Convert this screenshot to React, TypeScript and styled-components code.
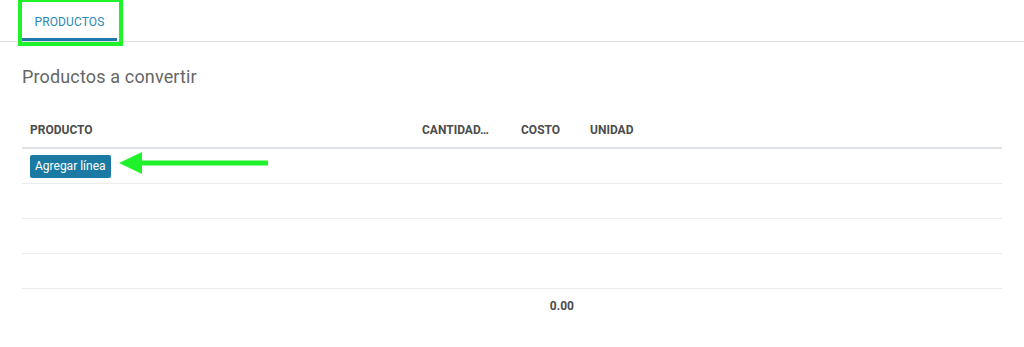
import React from "react";
import styled, { createGlobalStyle } from "styled-components";

const GlobalStyle = createGlobalStyle`
  html, body {
    margin: 0;
    padding: 0;
    background: #ffffff;
    font-family: Roboto, "Noto Sans", "Liberation Sans", sans-serif;
  }
`;

const Page = styled.div`
  position: relative;
  width: 1024px;
  height: 347px;
  overflow: hidden;
  background: #fff;
`;

const TabBar = styled.nav`
  display: flex;
  height: 41px;
  padding-left: 22px;
  border-bottom: 1px solid #e3e3e3;
`;

const Tab = styled.a<{ $active?: boolean }>`
  display: flex;
  align-items: center;
  justify-content: center;
  width: 95px;
  height: 33px;
  padding-top: 5px;
  box-sizing: content-box;
  font-size: 12px;
  letter-spacing: 0.1px;
  color: ${(p) => (p.$active ? "#2b87b5" : "#666")};
  border-bottom: 3px solid ${(p) => (p.$active ? "#1f78a8" : "transparent")};
  text-decoration: none;
`;

const Sheet = styled.section`
  padding: 24px 22px 0 22px;
`;

const Title = styled.h2`
  margin: 0 0 25px 0;
  font-size: 18px;
  font-weight: 400;
  line-height: 22px;
  letter-spacing: 0.15px;
  color: #666666;
`;

const Table = styled.table`
  width: 980px;
  border-collapse: collapse;
  table-layout: fixed;
  font-size: 12px;
`;

const Th = styled.th<{ $width?: number }>`
  width: ${(p) => (p.$width ? `${p.$width}px` : "auto")};
  height: 35px;
  padding: 0 8px;
  text-align: left;
  font-weight: 700;
  color: #4c4c4c;
  border-bottom: 2px solid #dee2e6;
  white-space: nowrap;
  box-sizing: border-box;
`;

const Td = styled.td<{ $right?: boolean; $bold?: boolean }>`
  height: 34px;
  padding: 0 8px;
  border-bottom: 1px solid #ececec;
  text-align: ${(p) => (p.$right ? "right" : "left")};
  font-weight: ${(p) => (p.$bold ? 700 : 400)};
  color: #4c4c4c;
`;

const FootTd = styled(Td)`
  border-bottom: none;
  height: 34px;
`;

const AddButton = styled.button`
  display: inline-block;
  height: 23px;
  padding: 0 5px;
  border: none;
  border-radius: 2px;
  background: #1b7aa3;
  color: #ffffff;
  font-family: inherit;
  font-size: 12px;
  line-height: 23px;
  cursor: pointer;
`;

const HighlightBox = styled.div`
  position: absolute;
  left: 18px;
  top: -2px;
  width: 105px;
  height: 48px;
  border: 4px solid #1ff22a;
  box-sizing: border-box;
  pointer-events: none;
`;

const Arrow = styled.svg`
  position: absolute;
  left: 118px;
  top: 151px;
  pointer-events: none;
`;

const columns = [
  { label: "PRODUCTO", width: 392 },
  { label: "CANTIDAD…", width: 99 },
  { label: "COSTO", width: 69 },
  { label: "UNIDAD", width: 0 },
];

export default function App() {
  return (
    <Page>
      <GlobalStyle />
      <TabBar>
        <Tab $active>PRODUCTOS</Tab>
      </TabBar>
      <Sheet>
        <Title>Productos a convertir</Title>
        <Table>
          <thead>
            <tr>
              {columns.map((c) => (
                <Th key={c.label} $width={c.width || undefined}>
                  {c.label}
                </Th>
              ))}
            </tr>
          </thead>
          <tbody>
            <tr>
              <Td colSpan={4}>
                <AddButton>Agregar línea</AddButton>
              </Td>
            </tr>
            {[0, 1, 2].map((i) => (
              <tr key={i}>
                <Td />
                <Td />
                <Td />
                <Td />
              </tr>
            ))}
          </tbody>
          <tfoot>
            <tr>
              <FootTd />
              <FootTd />
              <FootTd $right $bold>
                0.00
              </FootTd>
              <FootTd />
            </tr>
          </tfoot>
        </Table>
      </Sheet>
      <HighlightBox />
      <Arrow width="152" height="24" viewBox="0 0 152 24">
        <polygon points="1,12 24,1 24,23" fill="#1ff22a" />
        <rect x="22" y="9.5" width="128" height="5" fill="#1ff22a" />
      </Arrow>
    </Page>
  );
}
